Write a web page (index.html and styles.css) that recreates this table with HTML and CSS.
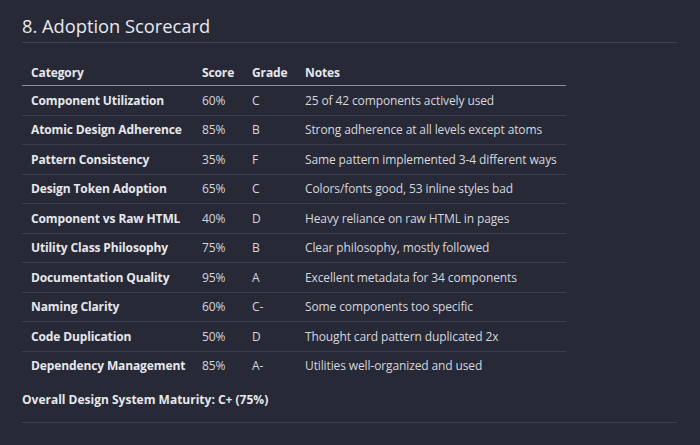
FILE: index.html
```html
<!DOCTYPE html>
<html>
<head>
<meta charset="utf-8">
<link rel="stylesheet" href="styles.css">
</head>
<body>
<section class="section">
  <h2 class="title">8. Adoption Scorecard</h2>
  <table class="score">
    <colgroup>
      <col class="c-cat"><col class="c-score"><col class="c-grade"><col class="c-notes">
    </colgroup>
    <thead>
      <tr><th>Category</th><th>Score</th><th>Grade</th><th>Notes</th></tr>
    </thead>
    <tbody>
      <tr><td class="cat">Component Utilization</td><td>60%</td><td>C</td><td>25 of 42 components actively used</td></tr>
      <tr><td class="cat">Atomic Design Adherence</td><td>85%</td><td>B</td><td>Strong adherence at all levels except atoms</td></tr>
      <tr><td class="cat">Pattern Consistency</td><td>35%</td><td>F</td><td>Same pattern implemented 3-4 different ways</td></tr>
      <tr><td class="cat">Design Token Adoption</td><td>65%</td><td>C</td><td>Colors/fonts good, 53 inline styles bad</td></tr>
      <tr><td class="cat">Component vs Raw HTML</td><td>40%</td><td>D</td><td>Heavy reliance on raw HTML in pages</td></tr>
      <tr><td class="cat">Utility Class Philosophy</td><td>75%</td><td>B</td><td>Clear philosophy, mostly followed</td></tr>
      <tr><td class="cat">Documentation Quality</td><td>95%</td><td>A</td><td>Excellent metadata for 34 components</td></tr>
      <tr><td class="cat">Naming Clarity</td><td>60%</td><td>C-</td><td>Some components too specific</td></tr>
      <tr><td class="cat">Code Duplication</td><td>50%</td><td>D</td><td>Thought card pattern duplicated 2x</td></tr>
      <tr><td class="cat">Dependency Management</td><td>85%</td><td>A-</td><td>Utilities well-organized and used</td></tr>
    </tbody>
  </table>
  <p class="overall">Overall Design System Maturity: C+ (75%)</p>
  <hr class="rule">
</section>
</body>
</html>
```

FILE: styles.css
```css
html, body {
  margin: 0;
  padding: 0;
  background: #272937;
}
body {
  font-family: "Open Sans", "Noto Sans", sans-serif;
  color: #d6d7de;
  width: 700px;
  height: 445px;
  overflow: hidden;
}
.section {
  padding: 14px 23px 0 22px;
}
.title {
  margin: 0;
  font-size: 18.3px;
  font-weight: 400;
  line-height: 24px;
  color: #e8e9ee;
  padding-bottom: 4px;
  border-bottom: 1px solid #3d4052;
}
.score {
  margin-top: 16px;
  border-collapse: collapse;
  width: 544px;
  table-layout: fixed;
  font-size: 12px;
  letter-spacing: -0.12px;
}
.c-cat { width: 171px; }
.c-score { width: 50px; }
.c-grade { width: 53px; }
.c-notes { width: 270px; }
.score th {
  text-align: left;
  font-weight: 700;
  color: #e6e7ec;
  padding: 5px 9px 4px 9px;
  line-height: 17px;
  border-bottom: 1px solid #8b8e9c;
}
.score td {
  padding: 5.5px 9px;
  line-height: 17.5px;
  border-bottom: 1px solid #3b3e50;
  white-space: nowrap;
}
.score tbody tr:last-child td {
  border-bottom: none;
}
.score td.cat {
  font-weight: 700;
  color: #e6e7ec;
}
.overall {
  margin: 11px 0 0 0;
  font-size: 12px;
  line-height: 18px;
  font-weight: 700;
  color: #e6e7ec;
}
.rule {
  margin: 13px 0 0 0;
  border: none;
  border-top: 1px solid #3d4052;
  height: 0;
}
```
